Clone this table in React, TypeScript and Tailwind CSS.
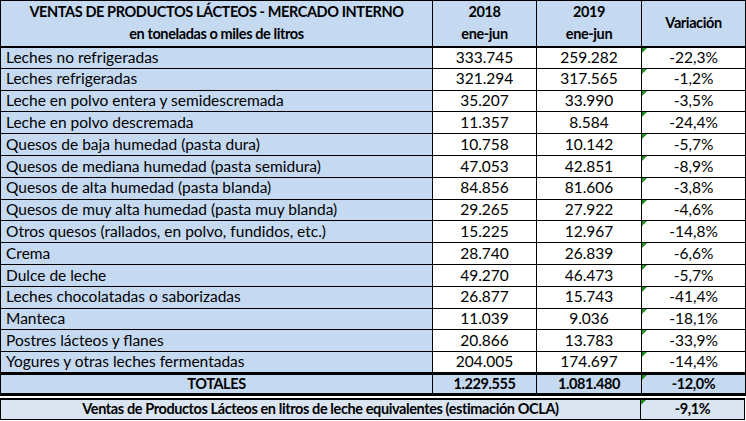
import React from "react";

const rows: [string, string, string, string][] = [
  ["Leches no refrigeradas", "333.745", "259.282", "-22,3%"],
  ["Leches refrigeradas", "321.294", "317.565", "-1,2%"],
  ["Leche en polvo entera y semidescremada", "35.207", "33.990", "-3,5%"],
  ["Leche en polvo descremada", "11.357", "8.584", "-24,4%"],
  ["Quesos de baja humedad (pasta dura)", "10.758", "10.142", "-5,7%"],
  ["Quesos de mediana humedad (pasta semidura)", "47.053", "42.851", "-8,9%"],
  ["Quesos de alta humedad (pasta blanda)", "84.856", "81.606", "-3,8%"],
  ["Quesos de muy alta humedad (pasta muy blanda)", "29.265", "27.922", "-4,6%"],
  ["Otros quesos (rallados, en polvo, fundidos, etc.)", "15.225", "12.967", "-14,8%"],
  ["Crema", "28.740", "26.839", "-6,6%"],
  ["Dulce de leche", "49.270", "46.473", "-5,7%"],
  ["Leches chocolatadas o saborizadas", "26.877", "15.743", "-41,4%"],
  ["Manteca", "11.039", "9.036", "-18,1%"],
  ["Postres lácteos y flanes", "20.866", "13.783", "-33,9%"],
  ["Yogures y otras leches fermentadas", "204.005", "174.697", "-14,4%"],
];

// small green marker Excel puts in a cell's corner
const Flag = () => (
  <span className="absolute left-0 top-0 w-0 h-0 border-t-[5px] border-r-[5px] border-t-[#1f8f1f] border-r-transparent" />
);

const bold = "font-bold text-[14.5px] tracking-[-0.4px]";

export default function App() {
  return (
    <div
      className="w-[746px] h-[421px] bg-white overflow-hidden text-black text-[15.5px] leading-none"
      style={{ fontFamily: "Lato, 'Open Sans', sans-serif" }}
    >
      <table className="table-fixed border-collapse w-[745px]">
        <colgroup>
          <col className="w-[432px]" />
          <col className="w-[104px]" />
          <col className="w-[105px]" />
          <col className="w-[104px]" />
        </colgroup>
        <thead>
          <tr className={`h-[46px] bg-[#c5d9f1] ${bold}`}>
            <th className="border border-black border-b-2 text-center align-middle">
              <div>VENTAS DE PRODUCTOS LÁCTEOS - MERCADO INTERNO</div>
              <div className="mt-[7px]">en toneladas o miles de litros</div>
            </th>
            <th className="border border-black border-b-2 text-center">
              <div>2018</div>
              <div className="mt-[7px]">ene-jun</div>
            </th>
            <th className="border border-black border-b-2 text-center">
              <div>2019</div>
              <div className="mt-[7px]">ene-jun</div>
            </th>
            <th className="border border-black border-b-2 text-center">Variación</th>
          </tr>
        </thead>
        <tbody>
          {rows.map(([label, a, b, v]) => (
            <tr key={label} className="h-[21.8px]">
              <td className="border border-black bg-[#c5d9f1] pl-[5px] whitespace-nowrap">{label}</td>
              <td className="border border-black text-center">{a}</td>
              <td className="border border-black text-center">{b}</td>
              <td className="relative border border-black text-center">
                <Flag />
                {v}
              </td>
            </tr>
          ))}
          <tr className={`h-[21px] bg-[#c5d9f1] ${bold}`}>
            <td className="border border-black border-t-[3px] border-b-[3px] text-center">TOTALES</td>
            <td className="border border-black border-t-[3px] border-b-[3px] text-center">1.229.555</td>
            <td className="border border-black border-t-[3px] border-b-[3px] text-center">1.081.480</td>
            <td className="relative border border-black border-t-[3px] border-b-[3px] text-center">
              <Flag />
              -12,0%
            </td>
          </tr>
        </tbody>
      </table>

      {/* equivalentes row sits apart from the table, after a thin white gap */}
      <div className={`mt-[2px] w-[745px] h-[22px] flex border border-black border-t-2 bg-[#dbe5f1] ${bold}`}>
        <div className="w-[640px] flex items-center justify-center border-r border-black">
          Ventas de Productos Lácteos en litros de leche equivalentes (estimación OCLA)
        </div>
        <div className="relative flex-1 flex items-center justify-center">
          <Flag />
          -9,1%
        </div>
      </div>
    </div>
  );
}
